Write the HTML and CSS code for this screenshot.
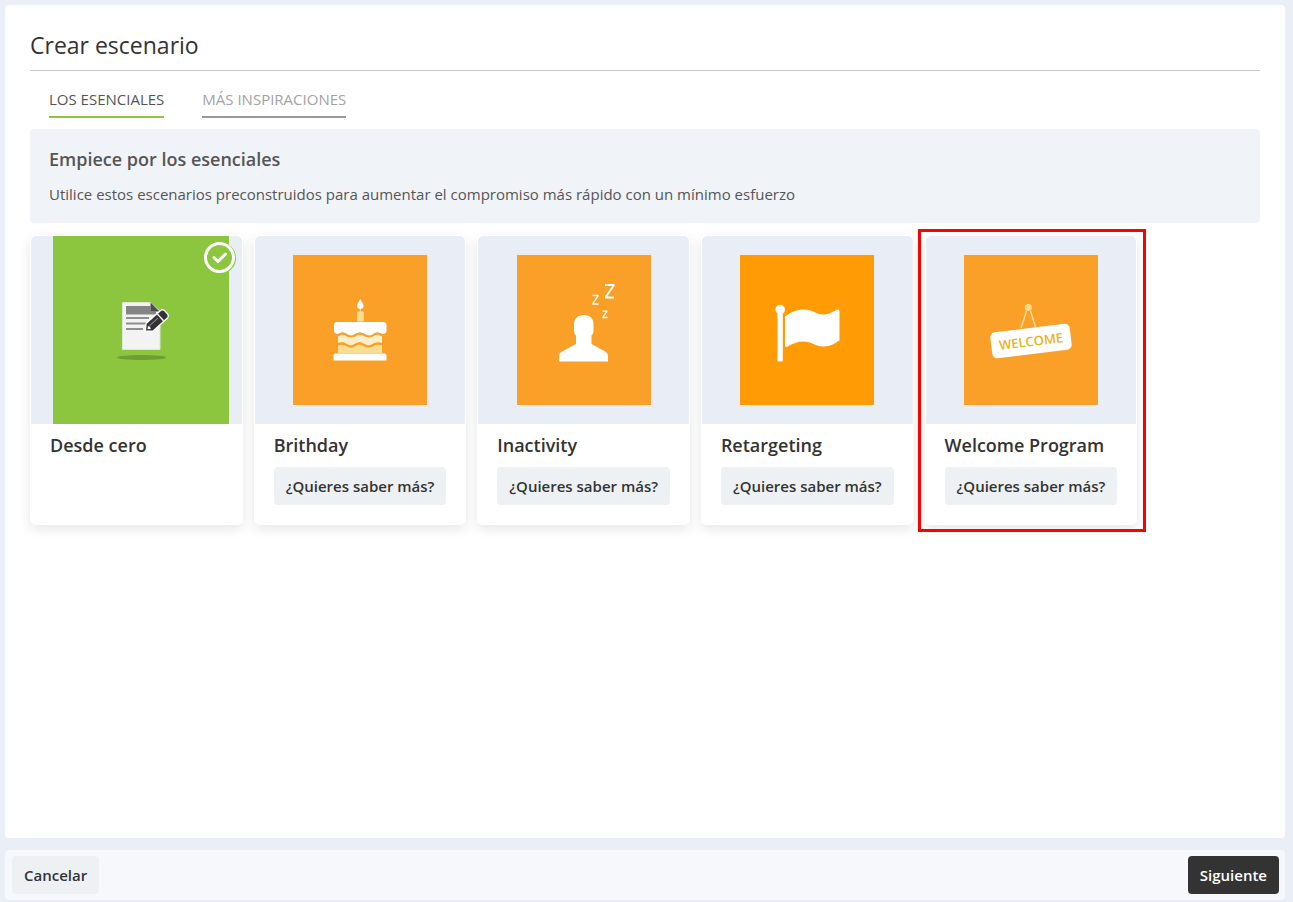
FILE: index.html
```html
<!DOCTYPE html>
<html lang="es">
<head>
<meta charset="utf-8">
<meta name="viewport" content="width=device-width, initial-scale=1">
<title>Crear escenario</title>
<link rel="stylesheet" href="styles.css">
</head>
<body>
<div class="page">
  <main class="panel">
    <h1 class="panel-title">Crear escenario</h1>
    <nav class="tabs">
      <a class="tab tab-active" href="#esenciales" aria-current="page">LOS ESENCIALES</a>
      <a class="tab" href="#inspiraciones">MÁS INSPIRACIONES</a>
    </nav>
    <section class="intro">
      <h2 class="intro-title">Empiece por los esenciales</h2>
      <p class="intro-text">Utilice estos escenarios preconstruidos para aumentar el compromiso más rápido con un mínimo esfuerzo</p>
    </section>
    <div class="cards">
      <article class="card">
        <div class="thumb thumb-selected">
          <svg class="art-full" viewBox="0 0 176 188" aria-hidden="true">
            <rect width="176" height="188" fill="#8cc63f"/>
            <ellipse cx="88.500" cy="121.500" rx="24.500" ry="2.400" fill="#6f9c33"/>
            <path d="M69.500 66.500h28l9.500 9v38h-37.500z" fill="#f3f3f3" stroke="#dfe6d2"/>
            <path d="M73 70h24.500v5.500h5.500v3H73z" fill="#858585"/>
            <path d="M97.500 66.500l9 9h-9z" fill="#4d4d4d"/>
            <path d="M73 82h23M73 87.500h20M73 93h17" stroke="#8f8f8f" stroke-width="2"/>
            <g transform="translate(93 94.500) rotate(-42)">
              <path d="M0 0l5-4.500h18.500q3 0 3 3v3q0 3-3 3H5z" fill="#333" stroke="#fff" stroke-width="2.600" stroke-linejoin="round"/>
              <path d="M0 0l5-4.500h18.500q3 0 3 3v3q0 3-3 3H5z" fill="#333"/>
              <path d="M19.500 -4.500v9" stroke="#fff" stroke-width="1.400"/>
              <path d="M6 -1.200h11" stroke="#8a8a8a"/>
              <path d="M2 0l2.500-2 1 2-1 2z" fill="#fff"/>
            </g>
          </svg>
          <svg class="check" viewBox="0 0 32 32" role="img" aria-label="Seleccionado">
            <circle cx="16" cy="16" r="16" fill="#8cc63f"/>
            <circle cx="15.500" cy="15.500" r="14" fill="#8cc63f" stroke="#fff" stroke-width="3"/>
            <path d="M10 15.500l4 4 7.500-7.500" fill="none" stroke="#fff" stroke-width="3" stroke-linecap="round" stroke-linejoin="round"/>
          </svg>
        </div>
        <h3 class="card-title">Desde cero</h3>
      </article>
      <article class="card">
        <div class="thumb">
          <svg class="art" viewBox="0 0 134 150" aria-hidden="true">
            <rect width="134" height="150" fill="#faa028"/>
            <path d="M67.300 44c1.500 3 3.200 4.500 3.200 6.800a3.200 3.200 0 0 1-6.400 0c0-2.300 1.700-3.800 3.200-6.800z" fill="#fff"/>
            <path d="M67.300 54v3" stroke="#f8dd94"/>
            <rect x="64" y="56.500" width="6.800" height="10" rx="1" fill="#f8dd94"/>
            <path d="M45 88h44v10H45z" fill="#f8dd94"/>
            <path d="M45 79h44v10c-3-1.500-6-1.500-9 .5s-5.500 2-9-.5-6-2-9 .5-5.500 2-8.500-.5-5.500-1.500-8.500 0z" fill="#fdeecb"/>
            <path d="M44.500 89.500c3-1.500 6-1.500 9 .5s5.500 2 8.500 0 5.500-2 9 0 6 2 9 0 6-2 9.500-.5" fill="none" stroke="#faa028" stroke-width="2.400"/>
            <path d="M44 67h46q3.500 0 3.500 3v6q0 3-4.500 3c-3-2-6-2-8.500 0s-5.500 2-9 0-6-2-9 0-6 2-9 0-5-2-8 0q-4.500 0-4.500-3V70q0-3 3-3z" fill="#fff"/>
            <path d="M90.500 80.200q-1 .3-2-.2c-3-2-5.500-2-8 0s-5.500 2-9 0-6-2-9 0-6 2-9 0-5-2-8 0q-1 .5-2 .2" fill="none" stroke="#faa028" stroke-width="2.200"/>
            <path d="M42.500 98.500h49q2 0 2 2v5h-53v-5q0-2 2-2z" fill="#fff"/>
          </svg>
        </div>
        <h3 class="card-title">Brithday</h3>
        <button class="button" type="button">¿Quieres saber más?</button>
      </article>
      <article class="card">
        <div class="thumb">
          <svg class="art" viewBox="0 0 134 150" aria-hidden="true">
            <rect width="134" height="150" fill="#faa028"/>
            <path d="M67 60c6.500 0 9.500 4 9.500 9v7c0 2-1 3.500-2 4.500v8.500l14.500 8q2 1.500 2 4v5.500h-49v-5.500q0-2.500 2-4l15-8v-8.500c-1-1-2-2.500-2-4.500v-7c0-5 3.500-9 10-9z" fill="#fff"/>
            <path d="M88 30h8.500v.7l-7.500 11v.7h8" fill="none" stroke="#fff" stroke-width="2"/>
            <path d="M75.500 40.500h5.500v.5l-5 7.500v.5h5.500" fill="none" stroke="#fff" stroke-width="1.300"/>
            <path d="M85.500 56.200h4.200v.5l-3.700 5.300v.5h4.500" fill="none" stroke="#fff" stroke-width="1.300"/>
          </svg>
        </div>
        <h3 class="card-title">Inactivity</h3>
        <button class="button" type="button">¿Quieres saber más?</button>
      </article>
      <article class="card">
        <div class="thumb">
          <svg class="art" viewBox="0 0 134 150" aria-hidden="true">
            <rect width="134" height="150" fill="#ff9b05"/>
            <circle cx="40.200" cy="54.600" r="4.800" fill="#fff"/>
            <path d="M37.500 57h5.300v48q0 1.500-1.500 1.500h-2.300q-1.500 0-1.500-1.500z" fill="#fff"/>
            <path d="M45 61.500c6-4.500 12-7 19-7 8 0 13 5 19 5 5 0 8-2 13.500-4.500q3-1.500 3 1.500v29c-5 3-9 6-16 6-8 0-12-5-20-5-6 0-11 2-16 5q-2.500 1.500-2.500-1z" fill="#fff"/>
          </svg>
        </div>
        <h3 class="card-title">Retargeting</h3>
        <button class="button" type="button">¿Quieres saber más?</button>
      </article>
      <article class="card card-highlight">
        <div class="thumb">
          <svg class="art" viewBox="0 0 134 150" aria-hidden="true">
            <rect width="134" height="150" fill="#faa028"/>
            <path d="M62.500 56L57 73M66.500 56l5 16" stroke="#fbdc98" stroke-width="1.500"/>
            <circle cx="64.300" cy="52.500" r="3.600" fill="#f8d98e"/>
            <g transform="rotate(-7 67 86)">
              <rect x="27" y="73" width="80" height="26" rx="5" fill="#fff"/>
              <text class="sign" x="67" y="91" text-anchor="middle">WELCOME</text>
            </g>
          </svg>
        </div>
        <h3 class="card-title">Welcome Program</h3>
        <button class="button" type="button">¿Quieres saber más?</button>
      </article>
    </div>
  </main>
  <footer class="actions">
    <button class="button" type="button">Cancelar</button>
    <button class="button button-primary" type="button">Siguiente</button>
  </footer>
</div>
</body>
</html>
```
FILE: styles.css
```css
* {
  box-sizing: border-box;
}

body {
  margin: 0;
  background: #eaeff7;
  color: #333;
  font-family: "Open Sans", "Noto Sans", sans-serif;
  font-size: 15px;
}

h1, h2, h3, p {
  margin: 0;
}

.page {
  display: flex;
  flex-direction: column;
  gap: 12px;
  min-height: 100vh;
  padding: 5px 8px 2px 5px;
}

.panel {
  flex: 1;
  padding: 25px;
  background: #fff;
  border-radius: 4px;
}

.panel-title {
  padding-bottom: 9px;
  border-bottom: 1px solid #c8c8c8;
  font-size: 23px;
  font-weight: 400;
  line-height: 31px;
}

.tabs {
  display: flex;
  gap: 38px;
  padding: 18px 19px 11px;
}

.tab {
  padding-bottom: 7px;
  border-bottom: 2px solid #999;
  color: #a3a3a3;
  font-weight: 400;
  line-height: 20px;
  text-decoration: none;
}

.tab-active {
  border-color: #8cc63f;
  color: #555;
}

.intro {
  padding: 18px 19px;
  background: #f0f4f9;
  border-radius: 4px;
  color: #555;
}

.intro-title {
  margin-bottom: 12px;
  font-size: 18px;
  font-weight: 600;
  line-height: 25px;
}

.intro-text {
  line-height: 21px;
}

.cards {
  display: grid;
  grid-template-columns: repeat(5, calc(200% / 11));
  margin-top: 12px;
}

.card {
  position: relative;
  min-height: 290px;
  margin-right: 11px;
  padding: 1px 1px 20px;
  background: #fff;
  border-radius: 5px;
  box-shadow: 0 4px 12px rgba(0, 0, 0, 0.1);
}

.card-highlight::after {
  content: "";
  position: absolute;
  inset: -6px -9px -7px -7px;
  border: 3px solid #f00;
}

.thumb {
  position: relative;
  display: flex;
  align-items: center;
  justify-content: center;
  height: 188px;
  background: #e9edf5;
  border-radius: 5px 5px 0 0;
}

.thumb-selected {
  padding-left: 9px;
}

.art-full {
  height: 188px;
}

.art {
  height: 150px;
}

.check {
  position: absolute;
  top: 6px;
  right: 6px;
  width: 32px;
}

.sign {
  fill: #e8b11c;
  font-size: 13px;
  font-weight: 600;
}

.card-title {
  margin: 9px 19px;
  font-size: 18px;
  font-weight: 600;
  line-height: 25px;
}

.button {
  height: 38px;
  padding: 0 12px;
  border: 0;
  border-radius: 4px;
  background: #edf1f4;
  color: #333;
  font: inherit;
  font-weight: 600;
}

.card .button {
  margin-left: 19px;
}

.actions {
  display: flex;
  align-items: center;
  justify-content: space-between;
  padding: 6px 6px 6px 7px;
  background: #f6f8fc;
  border-radius: 4px;
}

.button-primary {
  background: #333;
  color: #fff;
}
```
